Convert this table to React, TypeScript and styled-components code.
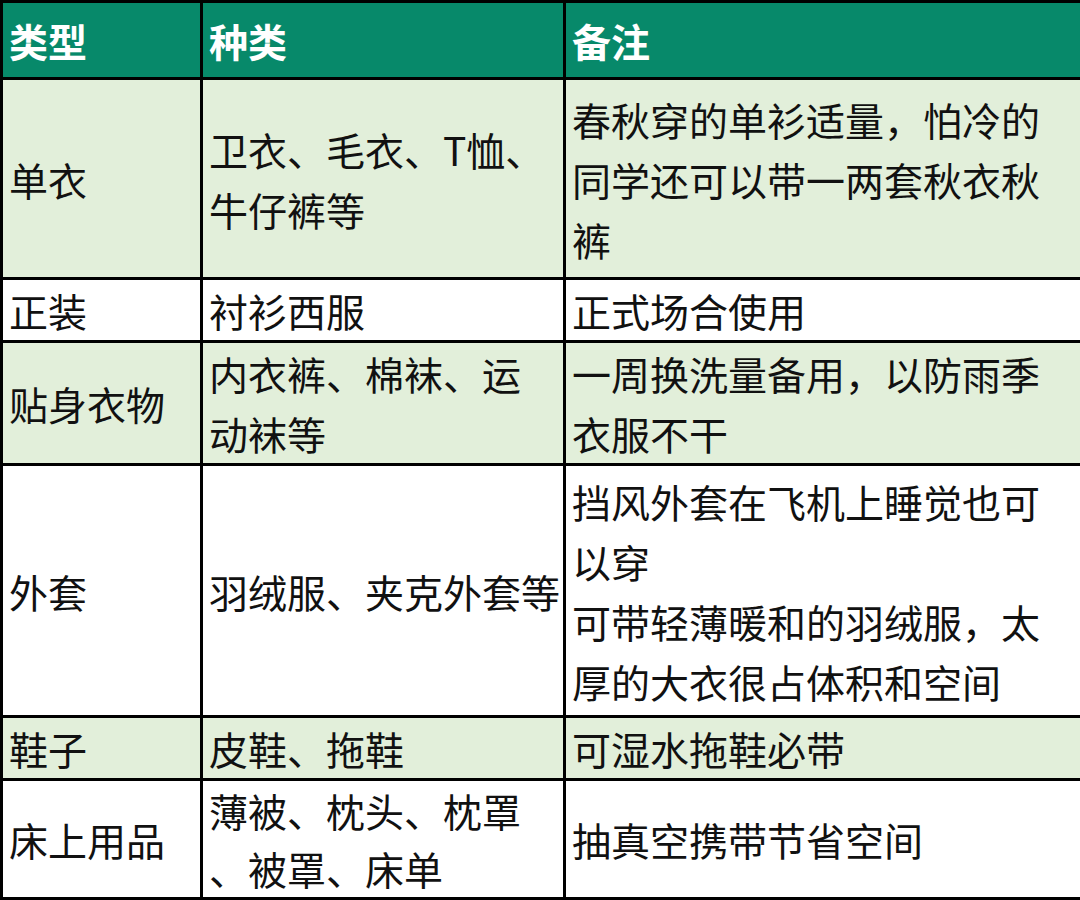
import styled, { createGlobalStyle } from "styled-components";

const GlobalStyle = createGlobalStyle`
  html, body {
    margin: 0;
    padding: 0;
    background: #ffffff;
  }
  body {
    font-family: "Noto Sans CJK SC", "Noto Sans", sans-serif;
  }
`;

interface Row {
  type: string[];
  kind: string[];
  note: string[];
  height: number;
  lineHeight?: number;
  shaded: boolean;
}

// heights are the cell heights without the 3px collapsed border
const rows: Row[] = [
  {
    type: ["单衣"],
    kind: ["卫衣、毛衣、T恤、", "牛仔裤等"],
    note: ["春秋穿的单衫适量，怕冷的", "同学还可以带一两套秋衣秋", "裤"],
    height: 197,
    shaded: true,
  },
  {
    type: ["正装"],
    kind: ["衬衫西服"],
    note: ["正式场合使用"],
    height: 60,
    shaded: false,
  },
  {
    type: ["贴身衣物"],
    kind: ["内衣裤、棉袜、运", "动袜等"],
    note: ["一周换洗量备用，以防雨季", "衣服不干"],
    height: 120,
    shaded: true,
  },
  {
    type: ["外套"],
    kind: ["羽绒服、夹克外套等"],
    note: [
      "挡风外套在飞机上睡觉也可",
      "以穿",
      "可带轻薄暖和的羽绒服，太",
      "厚的大衣很占体积和空间",
    ],
    height: 249,
    shaded: false,
  },
  {
    type: ["鞋子"],
    kind: ["皮鞋、拖鞋"],
    note: ["可湿水拖鞋必带"],
    height: 60,
    shaded: true,
  },
  {
    type: ["床上用品"],
    kind: ["薄被、枕头、枕罩", "、被罩、床单"],
    note: ["抽真空携带节省空间"],
    height: 116,
    lineHeight: 58,
    shaded: false,
  },
];

function Lines({ items }: { items: string[] }) {
  return (
    <>
      {items.map((line, i) => (
        <Line key={i}>{line}</Line>
      ))}
    </>
  );
}

export default function App() {
  return (
    <>
      <GlobalStyle />
      <Table>
        <colgroup>
          <col style={{ width: 200 }} />
          <col style={{ width: 363 }} />
          <col style={{ width: 517 }} />
        </colgroup>
        <thead>
          <tr>
            <HeadCell>类型</HeadCell>
            <HeadCell>种类</HeadCell>
            <HeadCell>备注</HeadCell>
          </tr>
        </thead>
        <tbody>
          {rows.map((row) => (
            <BodyRow key={row.type[0]} $shaded={row.shaded}>
              <Cell $height={row.height} $lh={row.lineHeight ?? 60}>
                <Lines items={row.type} />
              </Cell>
              <Cell $height={row.height} $lh={row.lineHeight ?? 60}>
                <Lines items={row.kind} />
              </Cell>
              <Cell $height={row.height} $lh={row.lineHeight ?? 60}>
                <Lines items={row.note} />
              </Cell>
            </BodyRow>
          ))}
        </tbody>
      </Table>
    </>
  );
}

const Table = styled.table`
  width: 1080px;
  border-collapse: collapse;
  table-layout: fixed;
  border: 3px solid #000000;
  color: #111111;
  font-size: 39px;
`;

const HeadCell = styled.th`
  height: 74px;
  padding: 0 6px;
  text-align: left;
  vertical-align: middle;
  background: #07896a;
  color: #ffffff;
  font-weight: 700;
  line-height: 60px;
  border: 3px solid #000000;
`;

const BodyRow = styled.tr<{ $shaded: boolean }>`
  background: ${(p) => (p.$shaded ? "#e2efda" : "#ffffff")};
`;

const Cell = styled.td<{ $height: number; $lh: number }>`
  height: ${(p) => p.$height}px;
  padding: 0 6px;
  vertical-align: middle;
  border: 3px solid #000000;
  line-height: ${(p) => p.$lh}px;
`;

const Line = styled.div`
  white-space: nowrap;
`;
